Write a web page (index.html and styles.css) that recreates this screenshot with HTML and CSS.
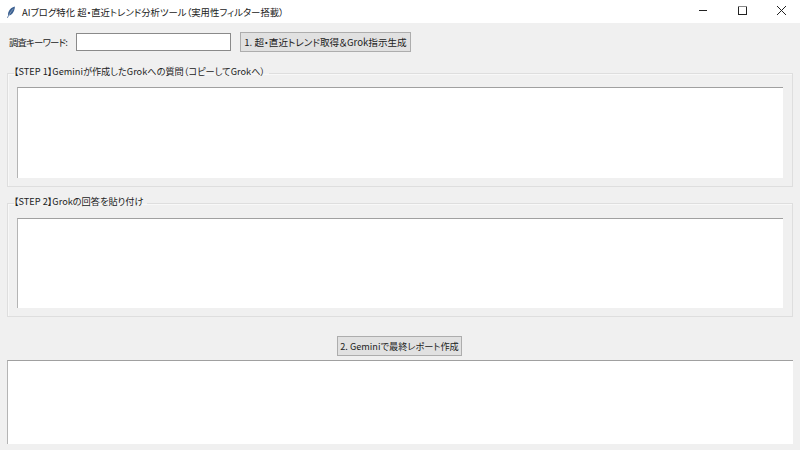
FILE: index.html
```html
<!DOCTYPE html>
<html lang="ja">
<head>
    <meta charset="UTF-8">
    <title>AIブログ特化 超・直近トレンド分析ツール（実用性フィルター搭載）</title>
    <link rel="stylesheet" href="styles.css">
</head>
<body>
    <div class="titlebar">
        <svg class="app-icon" width="8" height="12" viewBox="3 0 10 15">
            <path d="M12.8 0.5 C9.5 1 6.2 3.8 4.8 7.6 C4.2 9.2 4.2 10.6 4.5 11.6 L3.2 14.6 L4 15 L5.3 12 C7.4 11.8 9.6 10.2 11 7.6 C12.2 5.4 12.9 2.8 12.8 0.5 Z" fill="#3a5f90"/>
            <path d="M11 3.5 C9 5.5 7 8.5 5.3 12" stroke="#c4d3e4" stroke-width="0.6" fill="none"/>
        </svg>
        <span class="title-text">AIブログ特化 超・直近トレンド分析ツール（実用性フィルター搭載）</span>
        <div class="window-controls">
            <svg class="win-btn" width="39" height="23" viewBox="0 0 39 23">
                <path d="M16 10.5 H24" stroke="#222" stroke-width="1" fill="none"/>
            </svg>
            <svg class="win-btn" width="39" height="23" viewBox="0 0 39 23">
                <rect x="16.5" y="6.5" width="8" height="8" stroke="#222" stroke-width="1" fill="none"/>
                <path d="M16 6.5 H25" stroke="#888" stroke-width="1" fill="none"/>
            </svg>
            <svg class="win-btn" width="39" height="23" viewBox="0 0 39 23">
                <path d="M16 6 L25 15 M25 6 L16 15" stroke="#222" stroke-width="1" fill="none"/>
            </svg>
        </div>
    </div>

    <div class="content">
        <div class="search-row">
            <label class="search-label">調査キーワード:</label>
            <input class="search-input" type="text">
            <button class="btn btn-trend">1. 超・直近トレンド取得＆Grok指示生成</button>
        </div>

        <fieldset class="group">
            <legend>【STEP 1】Geminiが作成したGrokへの質問（コピーしてGrokへ）</legend>
            <textarea class="text-box"></textarea>
        </fieldset>

        <fieldset class="group group-second">
            <legend>【STEP 2】Grokの回答を貼り付け</legend>
            <textarea class="text-box"></textarea>
        </fieldset>

        <div class="action-row">
            <button class="btn btn-report">2. Geminiで最終レポート作成</button>
        </div>

        <textarea class="text-box report-box"></textarea>
    </div>
</body>
</html>
```

FILE: styles.css
```css
* {
    box-sizing: border-box;
}

html, body {
    height: 100%;
}

body {
    margin: 0;
    width: 800px;
    height: 450px;
    overflow: hidden;
    background: #f0f0f0;
    color: #222;
    font-family: "Noto Sans CJK JP", "Noto Sans", sans-serif;
    font-size: 9.2px;
    font-feature-settings: "palt";
}

.titlebar {
    display: flex;
    align-items: center;
    height: 23px;
    background: #fff;
    padding-left: 7px;
}

.app-icon {
    flex: none;
    margin-right: 7px;
}

.title-text {
    font-size: 9.4px;
    color: #222;
}

.window-controls {
    display: flex;
    margin-left: auto;
}

.win-btn {
    display: block;
}

.content {
    padding: 9px 7px 0;
}

.search-row {
    display: flex;
    align-items: center;
    height: 20px;
    padding-left: 2px;
}

.search-label {
    width: 67px;
    font-size: 9.4px;
    letter-spacing: -0.8px;
    white-space: nowrap;
}

.search-input {
    width: 155px;
    height: 18px;
    margin-right: 9px;
    background: #fff;
    border: 1px solid #8a8a8a;
    padding: 0 2px;
}

.btn {
    height: 20px;
    padding: 0;
    background: #e1e1e1;
    border: 1px solid #adadad;
    color: #222;
    font: inherit;
    font-feature-settings: inherit;
    white-space: nowrap;
}

.btn-trend {
    width: 171px;
    font-size: 9.6px;
}

.btn-report {
    width: 125px;
    margin-left: -1px;
}

.group {
    display: block;
    height: 122px;
    margin: 13px 0 0;
    padding: 6px 9px 0;
    border: 1px solid #dedede;
    box-shadow: inset 1px 1px 0 #f8f8f8;
    min-width: 0;
}

.group legend {
    margin-left: -3px;
    padding: 0 4px 4px 0;
    line-height: 12px;
}

.group-second {
    margin-top: 8px;
    padding-top: 7px;
}

.text-box {
    display: block;
    width: 100%;
    height: 91px;
    margin: 0;
    padding: 0;
    background: #fff;
    border: none;
    border-top: 1px solid #a0a0a0;
    border-left: 1px solid #b4b4b4;
    outline: none;
    resize: none;
}

.group-second .text-box {
    height: 90px;
}

.action-row {
    display: flex;
    justify-content: center;
    margin-top: 19px;
}

.report-box {
    height: 84px;
    margin-top: 4px;
}
```
